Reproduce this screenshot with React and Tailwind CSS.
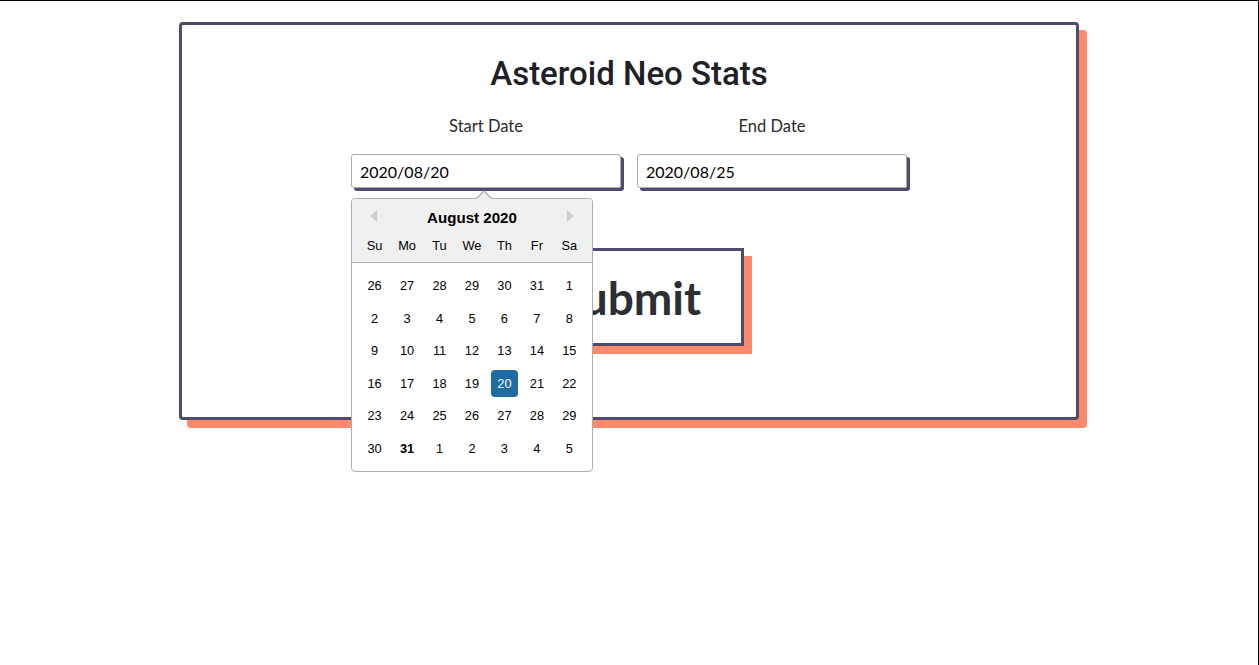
import React from "react";

const weeks = [
  [26, 27, 28, 29, 30, 31, 1],
  [2, 3, 4, 5, 6, 7, 8],
  [9, 10, 11, 12, 13, 14, 15],
  [16, 17, 18, 19, 20, 21, 22],
  [23, 24, 25, 26, 27, 28, 29],
  [30, 31, 1, 2, 3, 4, 5],
];
const dayNames = ["Su", "Mo", "Tu", "We", "Th", "Fr", "Sa"];

function DatePicker() {
  return (
    <div className="absolute left-0 top-[44px] z-10 w-[242px] rounded-[4px] border border-[#aeaeae] bg-white font-['Liberation_Sans',Arial,sans-serif] text-[12.8px] text-black">
      <div className="absolute left-[124px] top-[-9px] h-0 w-0 border-x-[8.5px] border-b-[8px] border-x-transparent border-b-[#aeaeae]" />
      <div className="absolute left-[125px] top-[-7px] h-0 w-0 border-x-[7.5px] border-b-[7px] border-x-transparent border-b-[#f0f0f0]" />
      <div className="relative rounded-t-[4px] border-b border-[#aeaeae] bg-[#f0f0f0] pt-[8px] text-center">
        <div className="absolute left-[18px] top-[11px] h-0 w-0 border-y-[6.5px] border-r-[7px] border-y-transparent border-r-[#cccccc]" />
        <div className="absolute right-[18px] top-[11px] h-0 w-0 border-y-[6.5px] border-l-[7px] border-y-transparent border-l-[#cccccc]" />
        <div className="h-[21px] text-[15.1px] font-bold leading-[21px]">August 2020</div>
        <div className="mx-[6.4px] mt-[1px] flex h-[33px] items-center">
          {dayNames.map((d) => (
            <div key={d} className="mx-[2.66px] w-[27.2px] text-center leading-[27.2px]">
              {d}
            </div>
          ))}
        </div>
      </div>
      <div className="m-[6.4px]">
        {weeks.map((w, i) => (
          <div key={i} className="flex">
            {w.map((d, j) => {
              const selected = i === 3 && d === 20;
              const today = i === 5 && d === 31;
              return (
                <div
                  key={j}
                  className={
                    "m-[2.66px] h-[27.2px] w-[27.2px] rounded-[4px] text-center leading-[27.2px] " +
                    (selected ? "bg-[#216ba5] text-white " : "") +
                    (today ? "font-bold" : "")
                  }
                >
                  {d}
                </div>
              );
            })}
          </div>
        ))}
      </div>
    </div>
  );
}

export default function App() {
  return (
    <div className="h-[665px] overflow-hidden border-t border-r border-black bg-white font-['Lato','Open_Sans',sans-serif]">
      <div className="ml-[179px] mt-[21px] w-[900px] rounded-[4px] border-[3px] border-[#4e4b6c] bg-white pt-[30px] pb-[71px] shadow-[8px_8px_0_#ff8a6b]">
        <h1 className="h-[38px] text-center font-['Roboto',sans-serif] text-[33px] font-medium leading-[38px] text-[#202127]">
          Asteroid Neo Stats
        </h1>
        <div className="mt-[21px] flex justify-center gap-[16px]">
          <div className="relative flex w-[270px] flex-col items-center">
            <label className="mb-[16px] h-[24px] text-[16.5px] leading-[24px] text-[#2a2a2e]">Start Date</label>
            <input
              readOnly
              value="2020/08/20"
              className="h-[34px] w-full rounded-[3px] border border-[#aaaaaa] px-[8px] text-[16px] text-black shadow-[3px_3px_0_#4e4b6c] outline-none"
            />
            <div className="absolute left-0 top-[40px] w-full">
              <DatePicker />
            </div>
          </div>
          <div className="flex w-[270px] flex-col items-center">
            <label className="mb-[16px] h-[24px] text-[16.5px] leading-[24px] text-[#2a2a2e]">End Date</label>
            <input
              readOnly
              value="2020/08/25"
              className="h-[34px] w-full rounded-[3px] border border-[#aaaaaa] px-[8px] text-[16px] text-black shadow-[3px_3px_0_#4e4b6c] outline-none"
            />
          </div>
        </div>
        <div className="mt-[60px] flex justify-center">
          <button className="h-[98px] border-[3px] border-[#4e4b6c] bg-white px-[40px] pt-[2px] text-[46px] font-bold leading-none text-[#2b2e33] shadow-[8px_8px_0_#ff8a6b]">
            Submit
          </button>
        </div>
      </div>
    </div>
  );
}
